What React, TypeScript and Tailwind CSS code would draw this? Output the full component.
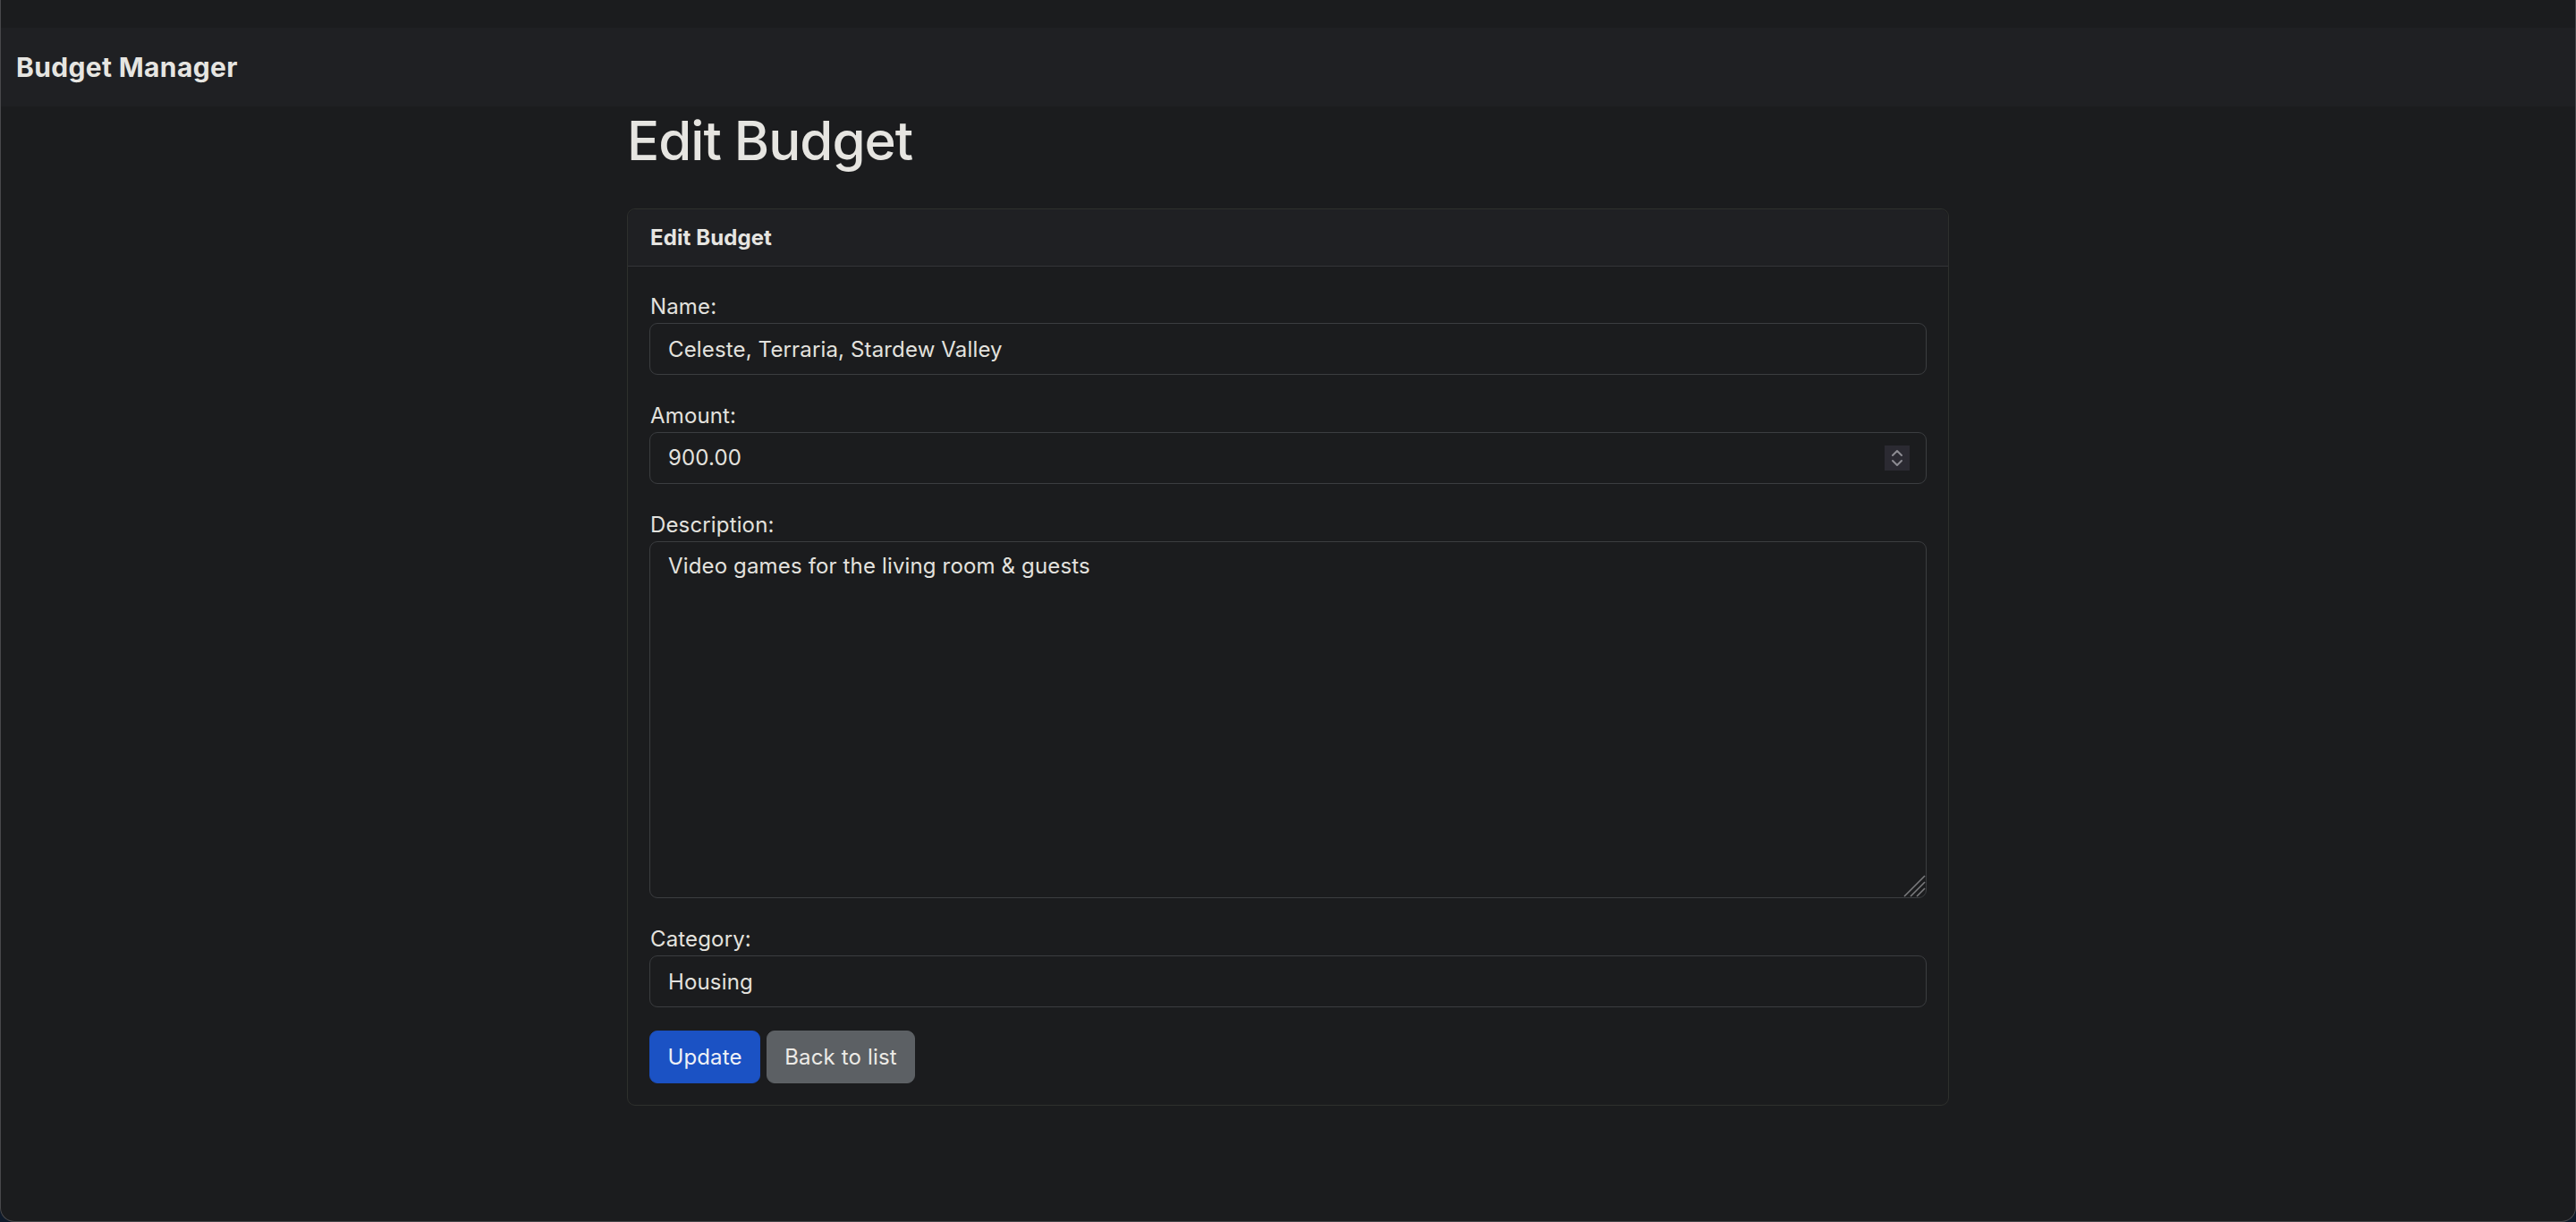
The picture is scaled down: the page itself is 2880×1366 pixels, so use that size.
import React from 'react';

const fieldBox =
  'box-border w-full h-[58px] rounded-[9px] border border-[#3b3d40] bg-[#1b1c1e] pl-[20px] pr-[18px] text-[24px] leading-[36px] tracking-[0.15px] text-[#e3e2de] outline-none';

function Label({ children }: { children: React.ReactNode }) {
  return <label className="block pl-[1px] text-[24px] leading-[36px] tracking-[0.15px] text-[#e3e2de]">{children}</label>;
}

function Spinner() {
  return (
    <div className="flex h-[28px] w-[28px] shrink-0 items-center justify-center bg-[#2b2a32]">
      <svg width="16" height="22" viewBox="0 0 16 22" fill="none" stroke="#8c8b92" strokeWidth="2" strokeLinecap="round" strokeLinejoin="round">
        <path d="M3 8 L8 3 L13 8" />
        <path d="M3 14 L8 19 L13 14" />
      </svg>
    </div>
  );
}

export default function App() {
  return (
    <div className="h-[1366px] w-full bg-[#0f1a2a] font-['Inter',_'Noto_Sans',_sans-serif]">
      <div className="box-border flex h-full flex-col overflow-hidden rounded-b-[16px] border-x border-b border-[#48484b] bg-[#1b1c1e]">
        {/* top strip */}
        <div className="h-[31px] shrink-0" />

        {/* navbar */}
        <nav className="flex h-[88px] shrink-0 items-center bg-[#1f2023] px-[17px]">
          <span className="text-[30px] font-bold leading-none tracking-[0.35px] text-[#e6e5e1]">Budget Manager</span>
        </nav>

        <main className="mx-auto w-[1478px]">
          <h1 className="mt-[2px] text-[60px] font-medium leading-[72px] tracking-[-1px] text-[#e6e5e1]">Edit Budget</h1>

          <div className="mt-[40px] rounded-[9px] border border-[#2e302d] bg-[#1b1c1e]">
            <div className="box-border flex h-[64px] items-center rounded-t-[9px] border-b border-[#333538] bg-[#1f2023] px-[25px]">
              <span className="text-[24px] font-bold tracking-[0.1px] text-[#e6e5e1]">Edit Budget</span>
            </div>

            <form className="px-[24px] pb-[24px] pt-[27px]" onSubmit={(e) => e.preventDefault()}>
              <div className="mb-[28px]">
                <Label>Name:</Label>
                <input className={fieldBox} defaultValue="Celeste, Terraria, Stardew Valley" />
              </div>

              <div className="mb-[28px]">
                <Label>Amount:</Label>
                <div className="box-border flex h-[58px] w-full items-center rounded-[9px] border border-[#3b3d40] bg-[#1b1c1e] pl-[20px] pr-[18px]">
                  <input
                    className="min-w-0 flex-1 bg-transparent text-[24px] leading-[36px] tracking-[0.15px] text-[#e3e2de] outline-none"
                    defaultValue="900.00"
                  />
                  <Spinner />
                </div>
              </div>

              <div className="mb-[28px]">
                <Label>Description:</Label>
                <div className="relative">
                  <textarea
                    className="box-border block h-[399px] w-full resize-none rounded-[9px] border border-[#3b3d40] bg-[#1b1c1e] pl-[20px] pr-[18px] py-[9px] text-[24px] leading-[36px] tracking-[0.15px] text-[#e3e2de] outline-none"
                    defaultValue="Video games for the living room & guests"
                  />
                  <svg className="absolute bottom-[1px] right-[1px]" width="26" height="26" viewBox="0 0 26 26" stroke="#7b7b7e" strokeWidth="1.6">
                    <path d="M2 25 L25 2" />
                    <path d="M9 25 L25 9" />
                    <path d="M16 25 L25 16" />
                  </svg>
                </div>
              </div>

              <div className="mb-[26px]">
                <Label>Category:</Label>
                <input className={fieldBox} defaultValue="Housing" />
              </div>

              <div className="flex gap-[7px]">
                <button
                  type="submit"
                  className="box-border flex h-[59px] w-[124px] items-center justify-center rounded-[9px] border border-[#1b4fc0] bg-[#1b52c4] text-[24px] tracking-[0.15px] text-[#eef0f6]"
                >
                  Update
                </button>
                <button
                  type="button"
                  className="box-border flex h-[59px] w-[166px] items-center justify-center rounded-[9px] border border-[#5d6165] bg-[#5c6064] text-[24px] tracking-[0.15px] text-[#eceae6]"
                >
                  Back to list
                </button>
              </div>
            </form>
          </div>
        </main>
      </div>
    </div>
  );
}
